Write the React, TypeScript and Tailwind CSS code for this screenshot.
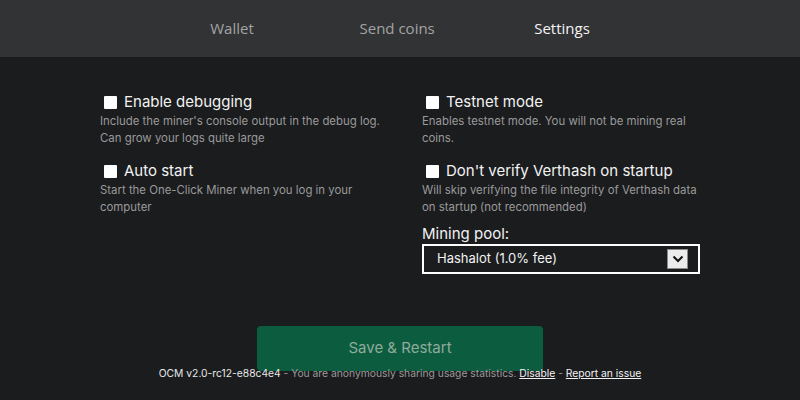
import React from "react";

function Check({ title, desc }: { title: string; desc: React.ReactNode }) {
  return (
    <div className="flex flex-col">
      <div className="flex items-center h-[20px]">
        <span className="ml-[4px] w-[13px] h-[13px] bg-white rounded-[1px]" />
        <span className="ml-[7px] text-[15px] text-[#f2f2f2] leading-[20px]">{title}</span>
      </div>
      <div className="mt-[1px] text-[11.4px] leading-[17px] text-[#9a9a9a]">{desc}</div>
    </div>
  );
}

export default function App() {
  return (
    <div
      className="w-[800px] h-[400px] bg-[#1b1c1e] flex flex-col overflow-hidden"
      style={{ fontFamily: "Inter, 'Noto Sans', sans-serif" }}
    >
      <div
        className="h-[57px] bg-[#323335] flex items-center justify-center gap-[100px] text-[15px] pr-[6px]"
        style={{ fontFamily: "'Open Sans', sans-serif" }}
      >
        <span className="text-[#a3a3a3] w-[65px] text-center">Wallet</span>
        <span className="text-[#a3a3a3] w-[65px] text-center whitespace-nowrap -ml-[5px] mr-[5px]">Send coins</span>
        <span className="text-[#f4f4f4] w-[65px] text-center">Settings</span>
      </div>
      <div className="flex justify-start pl-[100px] pt-[35px]">
        <div className="w-[322px] flex flex-col gap-[14px]">
          <Check
            title="Enable debugging"
            desc={<>Include the miner's console output in the debug log.<br />Can grow your logs quite large</>}
          />
          <Check
            title="Auto start"
            desc={<>Start the One-Click Miner when you log in your<br />computer</>}
          />
        </div>
        <div className="w-[278px] flex flex-col gap-[14px]">
          <Check
            title="Testnet mode"
            desc={<>Enables testnet mode. You will not be mining real<br />coins.</>}
          />
          <Check
            title="Don't verify Verthash on startup"
            desc={<>Will skip verifying the file integrity of Verthash data<br />on startup (not recommended)</>}
          />
          <div className="flex flex-col -mt-[5px]">
            <span className="text-[15px] leading-[18px] text-[#f2f2f2]">Mining pool:</span>
            <div className="mt-[1px] h-[30px] border-2 border-white flex items-center justify-between pl-[13px] pr-[10px]">
              <span className="text-[13px] text-[#f2f2f2]">Hashalot (1.0% fee)</span>
              <span className="w-[21px] h-[20px] bg-[#ececec] border border-[#8a8a8a] flex items-center justify-center">
                <svg width="12" height="8" viewBox="0 0 12 8">
                  <path d="M1.5 1.5 L6 6 L10.5 1.5" stroke="#111" strokeWidth="2" fill="none" />
                </svg>
              </span>
            </div>
          </div>
        </div>
      </div>
      <div className="flex flex-col items-center mt-[52px]">
        <button className="w-[286px] h-[45px] rounded-[4px] bg-[#0c5d3f] text-[15px] text-[#8fab9c]">
          Save &amp; Restart
        </button>
        <div className="-mt-[5px] text-[10.3px] leading-[14px] whitespace-nowrap">
          <span className="text-[#e6e6e6]">OCM v2.0-rc12-e88c4e4</span>
          <span className="text-[#9a9a9a]"> - You are anonymously sharing usage statistics. </span>
          <span className="text-[#f2f2f2] underline">Disable</span>
          <span className="text-[#9a9a9a]"> - </span>
          <span className="text-[#f2f2f2] underline">Report an issue</span>
        </div>
      </div>
    </div>
  );
}
